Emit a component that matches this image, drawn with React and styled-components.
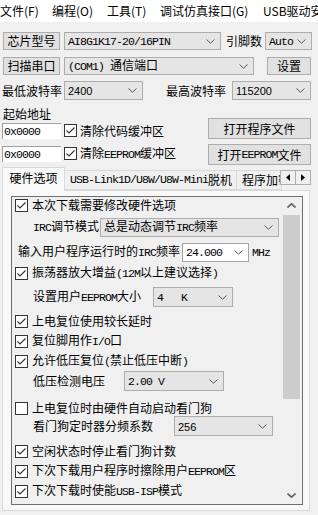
import styled, { createGlobalStyle } from "styled-components";

const GlobalStyle = createGlobalStyle`
  body {
    margin: 0;
    background: #f0f0f0;
    font-family: "Noto Sans CJK SC", "Liberation Sans", sans-serif;
    font-size: 12px;
    color: #000;
    overflow: hidden;
  }
  #root {
    width: 318px;
    height: 515px;
    overflow: hidden;
  }
`;

// latin runs inside SimSun-like text are half width
const Lat = styled.span`
  font-family: "Liberation Mono", monospace;
  font-size: 11.5px;
  letter-spacing: -0.9px;
  white-space: pre;
`;

const Txt = ({ children }) =>
  String(children)
    .split(/([\x20-\x7e]+)/)
    .map((s, i) => (i % 2 === 1 ? <Lat key={i}>{s}</Lat> : s));

const MenuBar = styled.div`
  height: 22px;
  background: #fff;
  display: flex;
  align-items: center;
  white-space: nowrap;
  overflow: hidden;
`;

const MenuItem = styled.span`
  width: ${(p) => p.$w}px;
  flex-shrink: 0;
  line-height: 16px;
  overflow: hidden;
`;

const Controls = styled.div`
  padding: 0 7px 0 2px;
`;

const Row = styled.div`
  display: flex;
  align-items: center;
  height: ${(p) => p.$h}px;
  margin-top: ${(p) => p.$mt || 0}px;
`;

const Btn = styled.div`
  box-sizing: border-box;
  width: ${(p) => p.$w}px;
  height: ${(p) => p.$h || 18}px;
  margin-left: ${(p) => p.$ml || 0}px;
  border: 1px solid #adadad;
  background: #e1e1e1;
  display: flex;
  align-items: center;
  justify-content: center;
  line-height: 14px;
  flex-shrink: 0;
  white-space: nowrap;
`;

const Field = styled.span`
  width: ${(p) => p.$w}px;
  margin-left: ${(p) => p.$ml || 0}px;
  flex-shrink: 0;
  line-height: 16px;
  white-space: nowrap;
`;

const SelectBox = styled.div`
  box-sizing: border-box;
  width: ${(p) => p.$w}px;
  height: ${(p) => p.$h || 18}px;
  margin-left: ${(p) => p.$ml || 0}px;
  border: 1px solid ${(p) => (p.$edit ? "#a5a5a5" : "#adadad")};
  background: ${(p) => (p.$edit ? "#fff" : "#e5e5e5")};
  display: flex;
  align-items: center;
  justify-content: space-between;
  padding: 0 5px 0 3px;
  flex-shrink: 0;
  white-space: nowrap;
  overflow: hidden;
  line-height: 14px;
`;

const SansValue = styled.span`
  font-family: "Liberation Sans", sans-serif;
  font-size: 11px;
`;

const Chevron = ({ up }) => (
  <svg width="9" height="5" viewBox="0 0 9 5">
    <polyline
      points={up ? "0.5,4.5 4.5,0.8 8.5,4.5" : "0.5,0.5 4.5,4.2 8.5,0.5"}
      fill="none"
      stroke={up ? "#606060" : "#555"}
      strokeWidth={up ? 1.6 : 1}
    />
  </svg>
);

const Select = ({ w, h, ml, edit, sans, children }) => (
  <SelectBox $w={w} $h={h} $ml={ml} $edit={edit}>
    <span>{sans ? <SansValue>{children}</SansValue> : <Txt>{children}</Txt>}</span>
    <Chevron />
  </SelectBox>
);

const AddrSection = styled.div`
  display: flex;
  justify-content: space-between;
`;

const AddrCol = styled.div`
  display: flex;
  flex-direction: column;
`;

const Caption = styled.div`
  margin-top: 6px;
  height: 16px;
  line-height: 16px;
  padding-left: 1px;
`;

const AddrInput = styled.div`
  box-sizing: border-box;
  width: 59px;
  height: 16px;
  background: #fff;
  border-top: 1px solid #a0a0a0;
  border-left: 1px solid #a0a0a0;
  display: flex;
  align-items: center;
  padding-left: 1px;
  flex-shrink: 0;
`;

const BtnCol = styled.div`
  padding-top: 18px;
  display: flex;
  flex-direction: column;
  gap: 5px;
`;

const Box = styled.span`
  box-sizing: border-box;
  width: 13px;
  height: 13px;
  margin-left: ${(p) => p.$ml || 0}px;
  border: 1px solid #333;
  background: #fff;
  display: inline-flex;
  align-items: center;
  justify-content: center;
  flex-shrink: 0;
`;

const CheckText = styled.span`
  margin-left: ${(p) => p.$ml || 4}px;
  line-height: 16px;
  white-space: nowrap;
`;

const Check = ({ on = true, ml }) => (
  <Box $ml={ml}>
    {on && (
      <svg width="11" height="11" viewBox="0 0 11 11">
        <polyline points="1.5,5.5 4,8 9.5,2.5" fill="none" stroke="#333" strokeWidth="1.1" />
      </svg>
    )}
  </Box>
);

const TabStrip = styled.div`
  position: relative;
  margin: 2px 7px 0 0;
  padding-left: 2px;
  height: 23px;
  display: flex;
  align-items: flex-end;
  white-space: nowrap;
`;

const Tab = styled.div`
  box-sizing: border-box;
  width: ${(p) => p.$w}px;
  height: ${(p) => (p.$active ? 24 : 20)}px;
  margin-bottom: ${(p) => (p.$active ? -1 : 0)}px;
  border: 1px solid #d9d9d9;
  border-left: ${(p) => (p.$active ? "1px solid #d9d9d9" : "none")};
  border-bottom: ${(p) => (p.$active ? "none" : "1px solid #d9d9d9")};
  background: ${(p) => (p.$active ? "#f9f9f9" : "#f0f0f0")};
  position: relative;
  z-index: ${(p) => (p.$active ? 2 : 1)};
  display: flex;
  align-items: ${(p) => (p.$active ? "flex-start" : "center")};
  justify-content: ${(p) => (p.$active ? "center" : "flex-start")};
  padding: ${(p) => (p.$active ? "2px 0 0 0" : "0 0 0 5px")};
  line-height: 16px;
  overflow: hidden;
  flex-shrink: 0;
`;

const TabArrows = styled.div`
  position: absolute;
  right: 0;
  top: 3px;
  display: flex;
  z-index: 3;
`;

const ArrowBtn = styled.div`
  box-sizing: border-box;
  width: 16px;
  height: 15px;
  border: 1px solid #adadad;
  margin-left: ${(p) => (p.$second ? -1 : 0)}px;
  background: #f0f0f0;
  display: flex;
  align-items: center;
  justify-content: center;
`;

const TabPage = styled.div`
  box-sizing: border-box;
  margin: 0 8px 0 2px;
  height: 321px;
  border: 1px solid #d9d9d9;
  background: #f9f9f9;
  padding: 5px 6px 5px 8px;
`;

const ListBox = styled.div`
  box-sizing: border-box;
  height: 100%;
  border: 1px solid #6e6e6e;
  background: #f0f0f0;
  display: flex;
`;

const Options = styled.div`
  flex: 1;
  padding-left: 3px;
  overflow: hidden;
`;

const OptRow = styled.div`
  display: flex;
  align-items: center;
  height: ${(p) => p.$h || 20}px;
  margin-top: ${(p) => p.$mt || 0}px;
  padding-left: ${(p) => p.$pl || 0}px;
  white-space: nowrap;
`;

const ScrollBar = styled.div`
  width: 17px;
  margin-right: 2px;
  display: flex;
  flex-direction: column;
`;

const ScrollBtn = styled.div`
  height: 17px;
  display: flex;
  align-items: center;
  justify-content: center;
  margin-top: ${(p) => (p.$bottom ? "auto" : 0)};
`;

const Thumb = styled.div`
  margin-top: 1px;
  height: 184px;
  background: #cdcdcd;
`;

const Tri = ({ left }) => (
  <svg width="4" height="7" viewBox="0 0 4 7">
    <polygon points={left ? "4,0 0,3.5 4,7" : "0,0 4,3.5 0,7"} fill="#000" />
  </svg>
);

const CheckOpt = ({ mt, h, on, text }) => (
  <OptRow $mt={mt} $h={h}>
    <Check on={on} />
    <CheckText>
      <Txt>{text}</Txt>
    </CheckText>
  </OptRow>
);

export default function App() {
  return (
    <>
      <GlobalStyle />
      <MenuBar>
        <MenuItem $w={52}>文件(F)</MenuItem>
        <MenuItem $w={55}>编程(O)</MenuItem>
        <MenuItem $w={53}>工具(T)</MenuItem>
        <MenuItem $w={103}>调试仿真接口(G)</MenuItem>
        <MenuItem $w={55}>USB驱动安装</MenuItem>
      </MenuBar>

      <Controls>
        <Row $h={18} $mt={10}>
          <Btn $w={57} $ml={1}>芯片型号</Btn>
          <Select w={157} ml={4}>AI8G1K17-20/16PIN</Select>
          <Field $w={36} $ml={5}>引脚数</Field>
          <Select w={47} ml={3}>Auto</Select>
        </Row>
        <Row $h={18} $mt={7}>
          <Btn $w={57} $ml={1}>扫描串口</Btn>
          <Select w={190} ml={4}>(COM1) 通信端口</Select>
          <Btn $w={44} $ml={13}>设置</Btn>
        </Row>
        <Row $h={19} $mt={6}>
          <Field $w={62}>最低波特率</Field>
          <Select w={79} h={19} sans>2400</Select>
          <Field $w={66} $ml={23}>最高波特率</Field>
          <Select w={79} h={19} sans>115200</Select>
        </Row>

        <AddrSection>
          <AddrCol>
            <Caption>起始地址</Caption>
            <Row $h={17}>
              <AddrInput><Txt>0x0000</Txt></AddrInput>
              <Check ml={3} />
              <CheckText $ml={3}>清除代码缓冲区</CheckText>
            </Row>
            <Row $h={17} $mt={6}>
              <AddrInput><Txt>0x0000</Txt></AddrInput>
              <Check ml={3} />
              <CheckText $ml={3}><Txt>清除EEPROM缓冲区</Txt></CheckText>
            </Row>
          </AddrCol>
          <BtnCol>
            <Btn $w={103} $h={21}>打开程序文件</Btn>
            <Btn $w={103} $h={21}><Txt>打开EEPROM文件</Txt></Btn>
          </BtnCol>
        </AddrSection>
      </Controls>

      <TabStrip>
        <Tab $w={63} $active>硬件选项</Tab>
        <Tab $w={172}><Txt>USB-Link1D/U8W/U8W-Mini脱机</Txt></Tab>
        <Tab $w={45}>程序加密</Tab>
        <TabArrows>
          <ArrowBtn><Tri left /></ArrowBtn>
          <ArrowBtn $second><Tri /></ArrowBtn>
        </TabArrows>
      </TabStrip>

      <TabPage>
        <ListBox>
          <Options>
            <CheckOpt h={16} text="本次下载需要修改硬件选项" />
            <OptRow $mt={4} $pl={18}>
              <Field $w={67}><Txt>IRC调节模式</Txt></Field>
              <Select w={179} h={19}>总是动态调节IRC频率</Select>
            </OptRow>
            <OptRow $mt={5} $pl={3}>
              <Field $w={164}><Txt>输入用户程序运行时的IRC频率</Txt></Field>
              <Select w={67} h={19} edit>24.000</Select>
              <Field $ml={3}><Txt>MHz</Txt></Field>
            </OptRow>
            <CheckOpt mt={1} text="振荡器放大增益(12M以上建议选择)" />
            <OptRow $mt={4} $pl={18}>
              <Field $w={120}><Txt>设置用户EEPROM大小</Txt></Field>
              <Select w={80} h={20}>{"4   K"}</Select>
            </OptRow>
            <CheckOpt mt={4} text="上电复位使用较长延时" />
            <CheckOpt text="复位脚用作I/O口" />
            <CheckOpt text="允许低压复位(禁止低压中断)" />
            <OptRow $pl={18}>
              <Field $w={91}>低压检测电压</Field>
              <Select w={100} h={20}>2.00 V</Select>
            </OptRow>
            <CheckOpt mt={9} h={16} on={false} text="上电复位时由硬件自动启动看门狗" />
            <OptRow $pl={18}>
              <Field $w={141}>看门狗定时器分频系数</Field>
              <Select w={99} h={20} sans>256</Select>
            </OptRow>
            <CheckOpt mt={5} text="空闲状态时停止看门狗计数" />
            <CheckOpt text="下次下载用户程序时擦除用户EEPROM区" />
            <CheckOpt text="下次下载时使能USB-ISP模式" />
          </Options>
          <ScrollBar>
            <ScrollBtn><Chevron up /></ScrollBtn>
            <Thumb />
            <ScrollBtn $bottom>
              <svg width="9" height="5" viewBox="0 0 9 5">
                <polyline points="0.5,0.5 4.5,4.2 8.5,0.5" fill="none" stroke="#606060" strokeWidth="1.6" />
              </svg>
            </ScrollBtn>
          </ScrollBar>
        </ListBox>
      </TabPage>
    </>
  );
}
